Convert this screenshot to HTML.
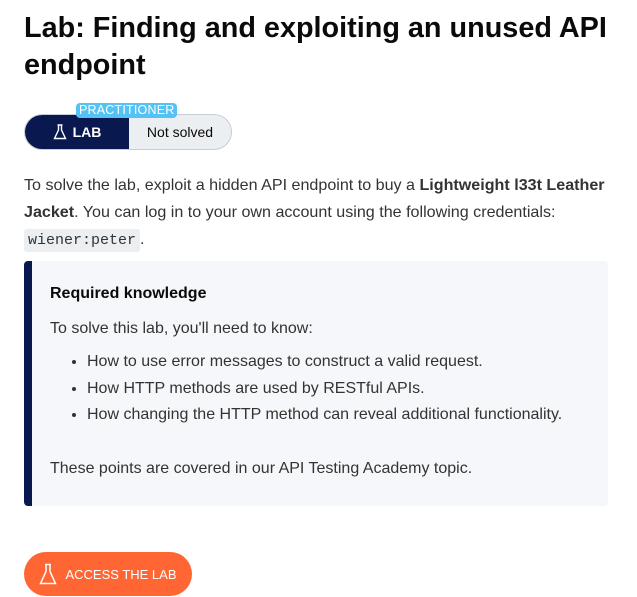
<!DOCTYPE html>
<html><head><style>
body{margin:0;background:#fff;font-family:"Liberation Sans",Arial,sans-serif;color:#333332;}
h1{position:absolute;left:24px;top:10px;margin:0;font-size:28.8px;line-height:37px;font-weight:bold;color:#0a0a0a;width:600px}
.pill{position:absolute;left:24px;top:114px;width:206px;height:34px;border:1px solid #c8ced6;border-radius:18px;overflow:hidden;background:#ebeff2;font-size:14px}
.dark{position:absolute;left:0;top:0;width:104px;height:34px;background:#0a1850;color:#fff;font-weight:bold;display:flex;align-items:center;justify-content:center;gap:6px}
.ns{position:absolute;left:104px;top:0;width:102px;height:34px;display:flex;align-items:center;justify-content:center;color:#0a0a0a}
.prac{position:absolute;left:76px;top:103px;background:#54c3f4;color:#fff;font-size:12.5px;line-height:15px;padding:0 3px;border-radius:4px;letter-spacing:.2px}
.p{position:absolute;left:24px;top:172px;width:600px;font-size:16.1px;line-height:27px;color:#333}
code{font-family:"Liberation Mono",monospace;font-size:15px;background:#ebeff2;padding:3px 4px;border-radius:3px;color:#333}
.box{position:absolute;left:24px;top:261px;width:576px;height:245px;background:#f5f7fa;border-left:8px solid #0a1850;border-radius:4px}
.box div{position:absolute;left:18px;font-size:16px;color:#333}
ul{position:absolute;left:18px;top:88px;margin:0;padding-left:37px;font-size:16px;line-height:26.5px}
.btn{position:absolute;left:24px;top:552px;width:168px;height:44px;background:#ff6633;border-radius:22px;color:#fff;font-size:13px;display:flex;align-items:center;justify-content:center;gap:8px}
</style></head><body>
<h1>Lab: Finding and exploiting an unused API endpoint</h1>
<div class="pill"><div class="dark"><svg width="14" height="16" viewBox="0 0 14 16"><path d="M4.5 1h5M5.5 1v5L1.5 14.5h11L8.5 6V1" fill="none" stroke="#fff" stroke-width="1.4"/></svg>LAB</div><div class="ns">Not solved</div></div>
<div class="prac">PRACTITIONER</div>
<div class="p">To solve the lab, exploit a hidden API endpoint to buy a <b>Lightweight l33t Leather Jacket</b>. You can log in to your own account using the following credentials: <code>wiener:peter</code>.</div>
<div class="box">
<div style="top:24px;font-weight:bold;color:#0a0a0a">Required knowledge</div>
<div style="top:59px">To solve this lab, you'll need to know:</div>
<ul><li>How to use error messages to construct a valid request.</li><li>How HTTP methods are used by RESTful APIs.</li><li>How changing the HTTP method can reveal additional functionality.</li></ul>
<div style="top:199px">These points are covered in our API Testing Academy topic.</div>
</div>
<div class="btn"><svg width="18" height="22" viewBox="0 0 18 22"><path d="M6 1.5h6M7 1.5v7L1.5 20.5h15L11 8.5v-7" fill="none" stroke="#fff" stroke-width="1.5"/></svg>ACCESS THE LAB</div>
</body></html>
